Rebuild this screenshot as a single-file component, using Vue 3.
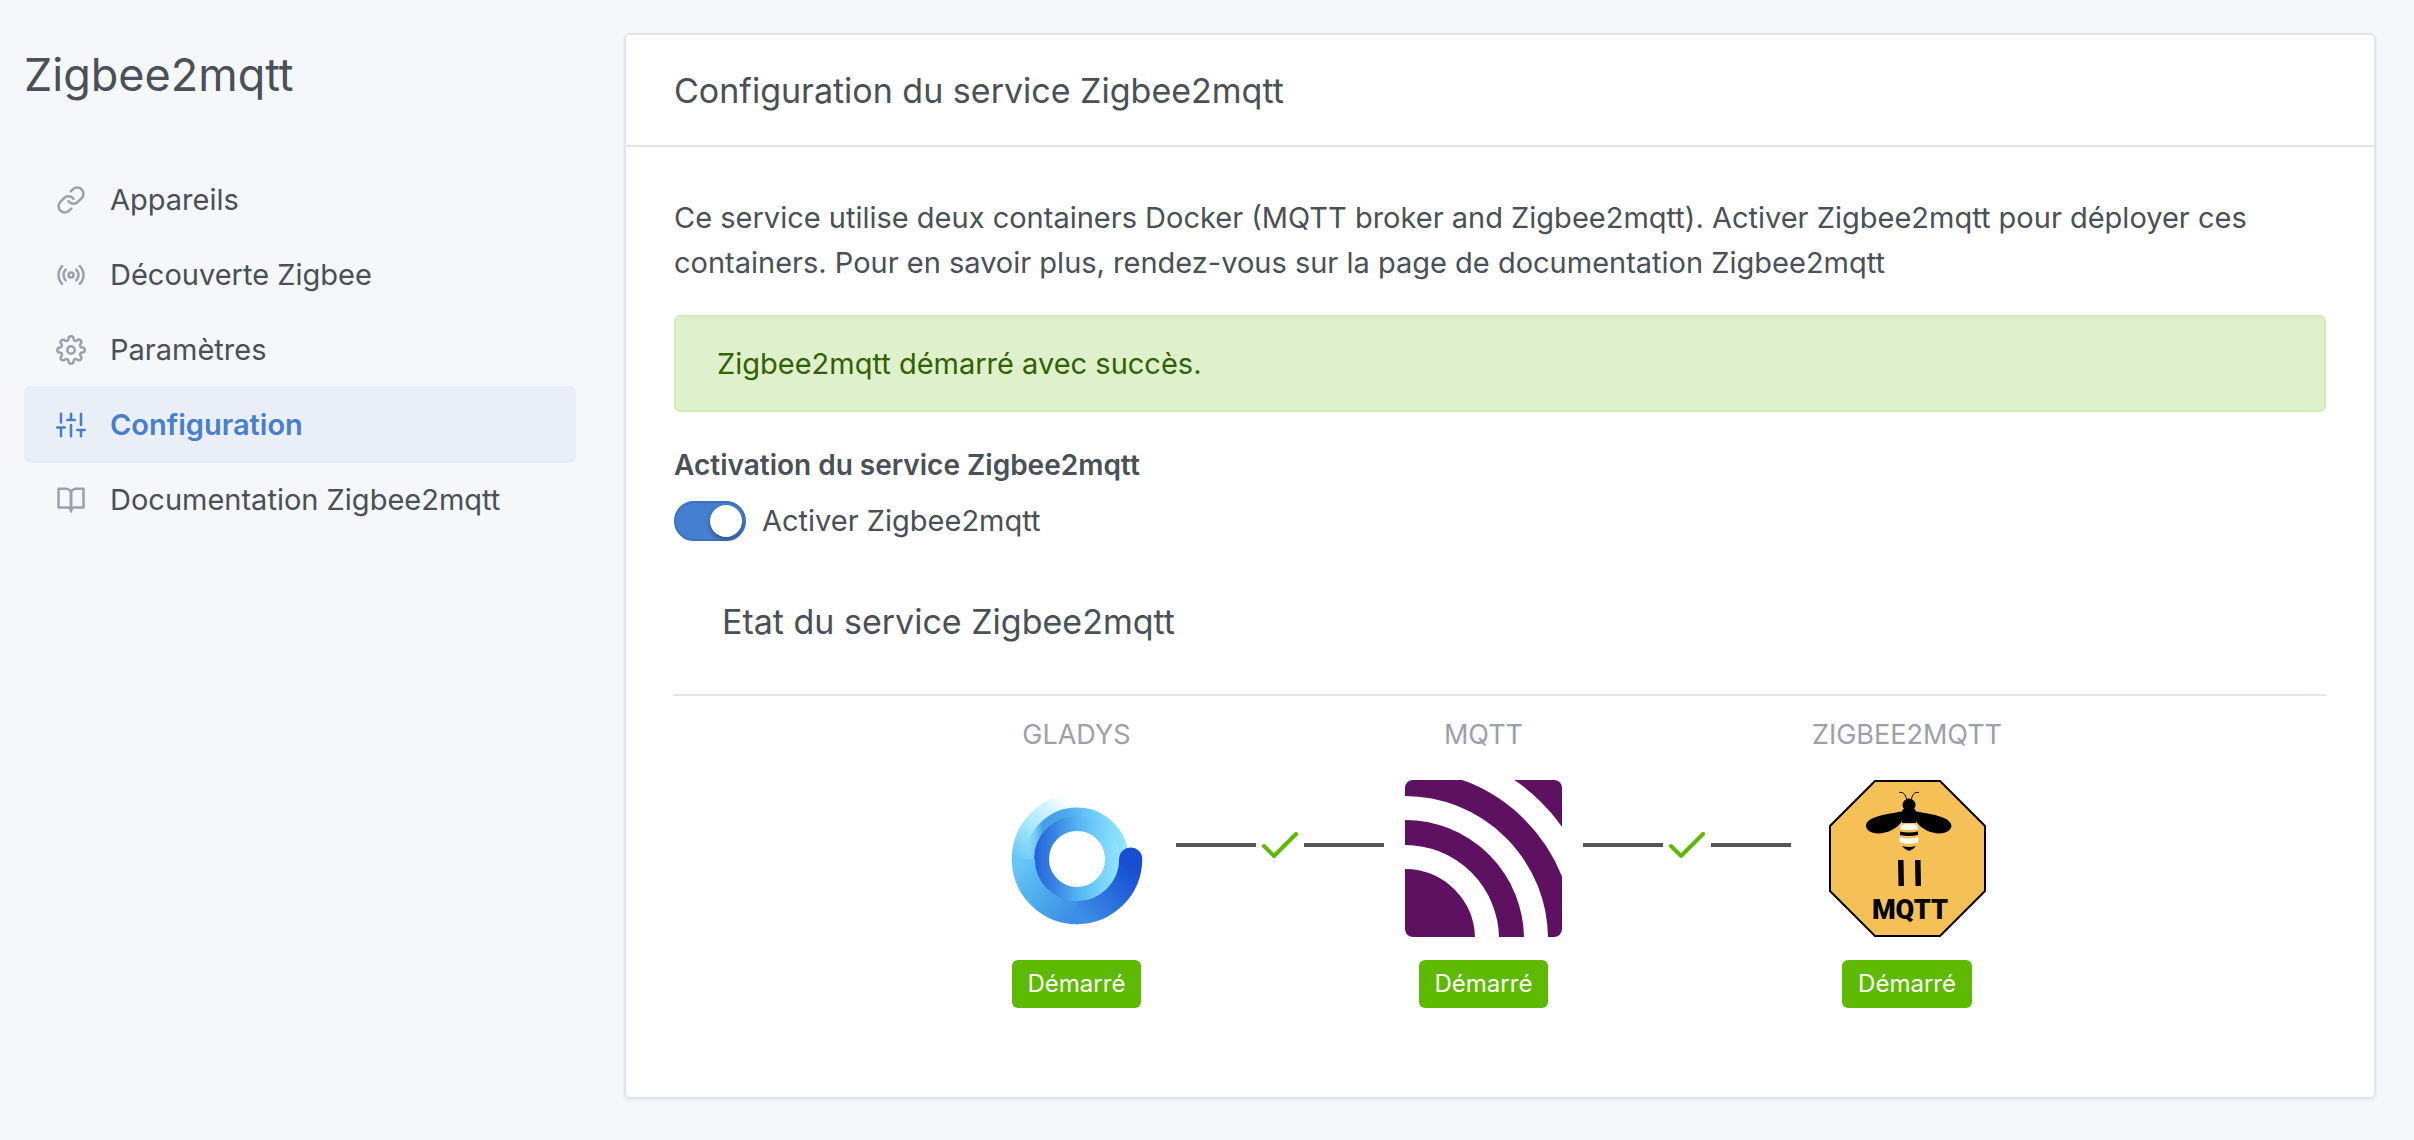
<template>
  <div class="page">
    <aside class="sidebar">
      <h1 class="page-title">Zigbee2mqtt</h1>
      <nav class="menu">
        <a
          v-for="item in menu"
          :key="item.label"
          href="#"
          class="menu-item"
          :class="{ active: item.active }"
        >
          <svg class="menu-icon" viewBox="0 0 24 24" aria-hidden="true">
            <path v-for="d in item.paths" :key="d" :d="d" />
          </svg>
          <span>{{ item.label }}</span>
        </a>
      </nav>
    </aside>

    <main class="card">
      <header class="card-header">
        <h2 class="card-title">Configuration du service Zigbee2mqtt</h2>
      </header>
      <div class="card-body">
        <p class="intro">
          Ce service utilise deux containers Docker (MQTT broker and Zigbee2mqtt). Activer
          Zigbee2mqtt pour déployer ces containers. Pour en savoir plus, rendez-vous sur la page de
          documentation Zigbee2mqtt
        </p>
        <div class="alert" role="status">Zigbee2mqtt démarré avec succès.</div>

        <div class="form-label">Activation du service Zigbee2mqtt</div>
        <label class="switch">
          <input v-model="enabled" type="checkbox" class="switch-input" />
          <span>Activer Zigbee2mqtt</span>
        </label>

        <h2 class="status-title">Etat du service Zigbee2mqtt</h2>

        <div class="status">
          <div class="service">
            <span class="service-name">Gladys</span>
            <svg class="service-logo" viewBox="0 0 157 157" role="img" aria-label="Gladys">
              <defs>
                <linearGradient id="ring" gradientUnits="userSpaceOnUse" x1="37" y1="0" x2="121" y2="0">
                  <stop offset="0" stop-color="#2364da" />
                  <stop offset="0.25" stop-color="#3a86e3" />
                  <stop offset="0.5" stop-color="#56b2f1" />
                  <stop offset="0.7" stop-color="#6ccaf8" />
                  <stop offset="1" stop-color="#90e5fb" />
                </linearGradient>
                <linearGradient id="ring-edge" gradientUnits="userSpaceOnUse" x1="30" y1="68" x2="130" y2="50">
                  <stop offset="0" stop-color="#5cb8f2" stop-opacity="0" />
                  <stop offset="0.18" stop-color="#459ee8" />
                  <stop offset="0.4" stop-color="#4ba6ec" />
                  <stop offset="0.65" stop-color="#68c7f7" />
                  <stop offset="1" stop-color="#98ebfb" />
                </linearGradient>
                <linearGradient id="tail" gradientUnits="userSpaceOnUse" x1="72" y1="16" x2="18" y2="80">
                  <stop offset="0" stop-color="#f2fdff" stop-opacity="0" />
                  <stop offset="0.2" stop-color="#e0f8fe" />
                  <stop offset="0.6" stop-color="#a3e6fb" />
                  <stop offset="1" stop-color="#66c6f8" />
                </linearGradient>
                <linearGradient id="swoosh-left" gradientUnits="userSpaceOnUse" x1="25" y1="79" x2="79" y2="132">
                  <stop offset="0" stop-color="#66c6f8" />
                  <stop offset="0.6" stop-color="#4ba5ec" />
                  <stop offset="1" stop-color="#3c8ee6" />
                </linearGradient>
                <linearGradient id="swoosh-right" gradientUnits="userSpaceOnUse" x1="79" y1="132" x2="132" y2="79">
                  <stop offset="0" stop-color="#3c8ee6" />
                  <stop offset="0.35" stop-color="#3077df" />
                  <stop offset="0.75" stop-color="#1d5ad7" />
                  <stop offset="1" stop-color="#184fd2" />
                </linearGradient>
              </defs>
              <g fill="none" stroke-width="23">
                <path d="M25.3 80A53.7 53.7 0 0 1 79 25.3" stroke="url(#tail)" />
                <path
                  d="M32.5 79A46.5 46.5 0 0 1 125.5 79"
                  stroke="url(#ring-edge)"
                  stroke-width="10"
                />
                <circle cx="79" cy="79" r="35.5" stroke="url(#ring)" stroke-width="15" />
                <path d="M25.3 79A53.7 53.7 0 0 0 80 132.7" stroke="url(#swoosh-left)" />
                <path d="M79 132.7A53.7 53.7 0 0 0 132.7 79" stroke="url(#swoosh-right)" />
              </g>
              <circle cx="132.7" cy="79" r="11.5" fill="#184fd2" />
            </svg>
            <span class="badge">Démarré</span>
          </div>

          <div class="link">
            <span class="link-line"></span>
            <svg class="link-check" viewBox="0 0 36 26" aria-hidden="true">
              <path d="M2 14 12 24 34 2" />
            </svg>
            <span class="link-line"></span>
          </div>

          <div class="service">
            <span class="service-name">MQTT</span>
            <svg class="service-logo" viewBox="0 0 157 157" role="img" aria-label="MQTT">
              <defs>
                <clipPath id="mqtt-frame"><rect width="157" height="157" rx="8" /></clipPath>
              </defs>
              <g clip-path="url(#mqtt-frame)">
                <rect width="157" height="157" fill="#5e1160" />
                <g fill="none" stroke="#fff" stroke-width="24">
                  <circle cx="0" cy="159" r="82" />
                  <circle cx="0" cy="159" r="131" />
                  <circle cx="0" cy="159" r="181" />
                </g>
              </g>
            </svg>
            <span class="badge">Démarré</span>
          </div>

          <div class="link">
            <span class="link-line"></span>
            <svg class="link-check" viewBox="0 0 36 26" aria-hidden="true">
              <path d="M2 14 12 24 34 2" />
            </svg>
            <span class="link-line"></span>
          </div>

          <div class="service service-wide">
            <span class="service-name">Zigbee2mqtt</span>
            <svg class="service-logo" viewBox="0 0 157 157" role="img" aria-label="Zigbee2mqtt">
              <path
                d="M46 1H111L156 46V111L111 156H46L1 111V46Z"
                fill="#f5c156"
                stroke="#000"
                stroke-width="2"
              />
              <!-- antennae, head, thorax and wings -->
              <path
                d="M78 20C76 14 75 12 70 12.5M82 20C84 14 85 12 90 12.5"
                fill="none"
                stroke="#000"
              />
              <circle cx="80" cy="25" r="6.5" />
              <path d="M74 29H86L88 36L87 43H73L72 36Z" />
              <path d="M75 31C60 34 37 36 37 46C38 57 64 56 73 41Z" />
              <path d="M85 31C100 34 122 36 122.5 46C121 57 96 56 87 41Z" />
              <!-- striped abdomen -->
              <path d="M72 45Q80 43 88 45L89 49Q80 51 71 49Z" fill="#fff" />
              <path d="M71 51.5Q80 53.5 89 51.5V55Q80 57 71 55Z" />
              <path d="M70.5 57Q80 60 89.5 57L89 62.5Q80 65 71 62.5Z" fill="#fff" />
              <path d="M73 66Q80 68 87 66Q84 70 80 71Q76 70 73 66Z" />
              <!-- pair of bars above the wordmark -->
              <path d="M69 80H74.5L75 106H69.5ZM86 80H91.5L92 106H86.5Z" />
              <text class="bee-text" x="81" y="139" text-anchor="middle">MQTT</text>
            </svg>
            <span class="badge">Démarré</span>
          </div>
        </div>
      </div>
    </main>
  </div>
</template>

<script setup>
import { ref } from 'vue'

const enabled = ref(true)

const menu = [
  {
    label: 'Appareils',
    paths: [
      'M10 13a5 5 0 0 0 7.54.54l3-3a5 5 0 0 0-7.07-7.07l-1.72 1.71',
      'M14 11a5 5 0 0 0-7.54-.54l-3 3a5 5 0 0 0 7.07 7.07l1.71-1.71'
    ]
  },
  {
    label: 'Découverte Zigbee',
    paths: [
      'M14 12a2 2 0 1 1-4 0a2 2 0 1 1 4 0',
      'M16.24 7.76a6 6 0 0 1 0 8.49m-8.48-.01a6 6 0 0 1 0-8.49m11.31-2.82a10 10 0 0 1 0 14.14m-14.14 0a10 10 0 0 1 0-14.14'
    ]
  },
  {
    label: 'Paramètres',
    paths: [
      'M15 12a3 3 0 1 1-6 0a3 3 0 1 1 6 0',
      'M19.4 15a1.65 1.65 0 0 0 .33 1.82l.06.06a2 2 0 0 1 0 2.83 2 2 0 0 1-2.83 0l-.06-.06a1.65 1.65 0 0 0-1.82-.33 1.65 1.65 0 0 0-1 1.51V21a2 2 0 0 1-2 2 2 2 0 0 1-2-2v-.09A1.65 1.65 0 0 0 9 19.4a1.65 1.65 0 0 0-1.82.33l-.06.06a2 2 0 0 1-2.83 0 2 2 0 0 1 0-2.83l.06-.06a1.65 1.65 0 0 0 .33-1.82 1.65 1.65 0 0 0-1.51-1H3a2 2 0 0 1-2-2 2 2 0 0 1 2-2h.09A1.65 1.65 0 0 0 4.6 9a1.65 1.65 0 0 0-.33-1.82l-.06-.06a2 2 0 0 1 0-2.83 2 2 0 0 1 2.83 0l.06.06a1.65 1.65 0 0 0 1.82.33H9a1.65 1.65 0 0 0 1-1.51V3a2 2 0 0 1 2-2 2 2 0 0 1 2 2v.09a1.65 1.65 0 0 0 1 1.51 1.65 1.65 0 0 0 1.82-.33l.06-.06a2 2 0 0 1 2.83 0 2 2 0 0 1 0 2.83l-.06.06a1.65 1.65 0 0 0-.33 1.82V9a1.65 1.65 0 0 0 1.51 1H21a2 2 0 0 1 2 2 2 2 0 0 1-2 2h-.09a1.65 1.65 0 0 0-1.51 1z'
    ]
  },
  {
    label: 'Configuration',
    active: true,
    paths: ['M4 21v-7M4 10V3M12 21v-9M12 8V3M20 21v-5M20 12V3M1 14h6M9 8h6M17 16h6']
  },
  {
    label: 'Documentation Zigbee2mqtt',
    paths: [
      'M2 3h6a4 4 0 0 1 4 4v14a3 3 0 0 0-3-3H2z',
      'M22 3h-6a4 4 0 0 0-4 4v14a3 3 0 0 1 3-3h7z'
    ]
  }
]
</script>

<style>
body {
  margin: 0;
  background: #f5f7fb;
}
</style>

<style scoped>
.page {
  display: grid;
  grid-template-columns: 552px 1fr;
  gap: 48px;
  padding: 33px 38px 41px 24px;
  color: #495057;
  font-family: Inter, "Liberation Sans", sans-serif;
  font-size: 29px;
  line-height: 45px;
}

.page-title {
  margin: 14px 0 58px;
  font-size: 45px;
  font-weight: 400;
  line-height: 56px;
}

.menu-item {
  display: flex;
  align-items: center;
  gap: 24px;
  height: 77px;
  margin-bottom: -2px;
  padding: 0 32px;
  border-radius: 6px;
  box-sizing: border-box;
  color: inherit;
  text-decoration: none;
}

.menu-item.active {
  background: #eaeef7;
  color: #467fcf;
  font-weight: 600;
}

.menu-icon {
  width: 30px;
  height: 30px;
  fill: none;
  stroke: #9aa0ac;
  stroke-width: 2;
  stroke-linecap: round;
  stroke-linejoin: round;
}

.active .menu-icon {
  stroke: #467fcf;
}

.card {
  border: 2px solid #e0e5ec;
  border-radius: 6px;
  background: #fff;
  box-shadow: 0 2px 4px rgba(0, 0, 0, 0.05);
}

.card-header {
  padding: 33px 48px 32px;
  border-bottom: 2px solid #e0e5ec;
}

.card-title,
.status-title {
  margin: 0;
  font-size: 34px;
  font-weight: 400;
}

.card-body {
  padding: 48px 48px 89px;
}

.intro {
  margin: 0 0 30px;
}

.alert {
  padding: 24px 41px;
  border: 2px solid #d2ecb8;
  border-radius: 6px;
  background: #dff1cc;
  color: #316100;
}

.form-label {
  margin: 31px 0 10px;
  font-size: 28px;
  font-weight: 600;
}

.switch {
  display: flex;
  align-items: center;
  gap: 16px;
  width: fit-content;
  cursor: pointer;
}

.switch-input {
  display: flex;
  align-items: center;
  box-sizing: border-box;
  width: 72px;
  height: 40px;
  margin: 0;
  padding: 2px;
  appearance: none;
  border: 2px solid #d0d6df;
  border-radius: 20px;
  background: #e9ecef;
  cursor: pointer;
}

.switch-input::before {
  content: "";
  width: 32px;
  height: 32px;
  border-radius: 50%;
  background: #fff;
  box-shadow: 0 2px 4px rgba(0, 0, 0, 0.4);
}

.switch-input:checked {
  justify-content: flex-end;
  border-color: #3d72be;
  background: #467fcf;
}

.status-title {
  margin-top: 24px;
  padding: 32px 48px 50px;
  border-bottom: 2px solid #e0e5ec;
}

.status {
  display: flex;
  justify-content: center;
  gap: 21px;
  margin-top: 16px;
}

.service {
  display: flex;
  flex-direction: column;
  align-items: center;
  gap: 23px;
}

.service-wide {
  min-width: 190px;
}

.service-name {
  color: #9aa0ac;
  font-size: 27px;
  text-transform: uppercase;
}

.service-logo {
  width: 157px;
  height: 157px;
}

.bee-text {
  font-family: Roboto, sans-serif;
  font-size: 27px;
  font-weight: 900;
}

.badge {
  padding: 0 16px;
  border-radius: 6px;
  background: #5eba00;
  color: #fff;
  font-size: 24px;
  line-height: 48px;
}

.link {
  display: flex;
  align-items: center;
  gap: 6px;
  height: 26px;
  margin-top: 120px;
}

.link-line {
  width: 80px;
  height: 4px;
  background: #555;
}

.link-check {
  width: 36px;
  height: 26px;
  fill: none;
  stroke: #5eba00;
  stroke-width: 4;
  stroke-linecap: round;
  stroke-linejoin: round;
}
</style>
